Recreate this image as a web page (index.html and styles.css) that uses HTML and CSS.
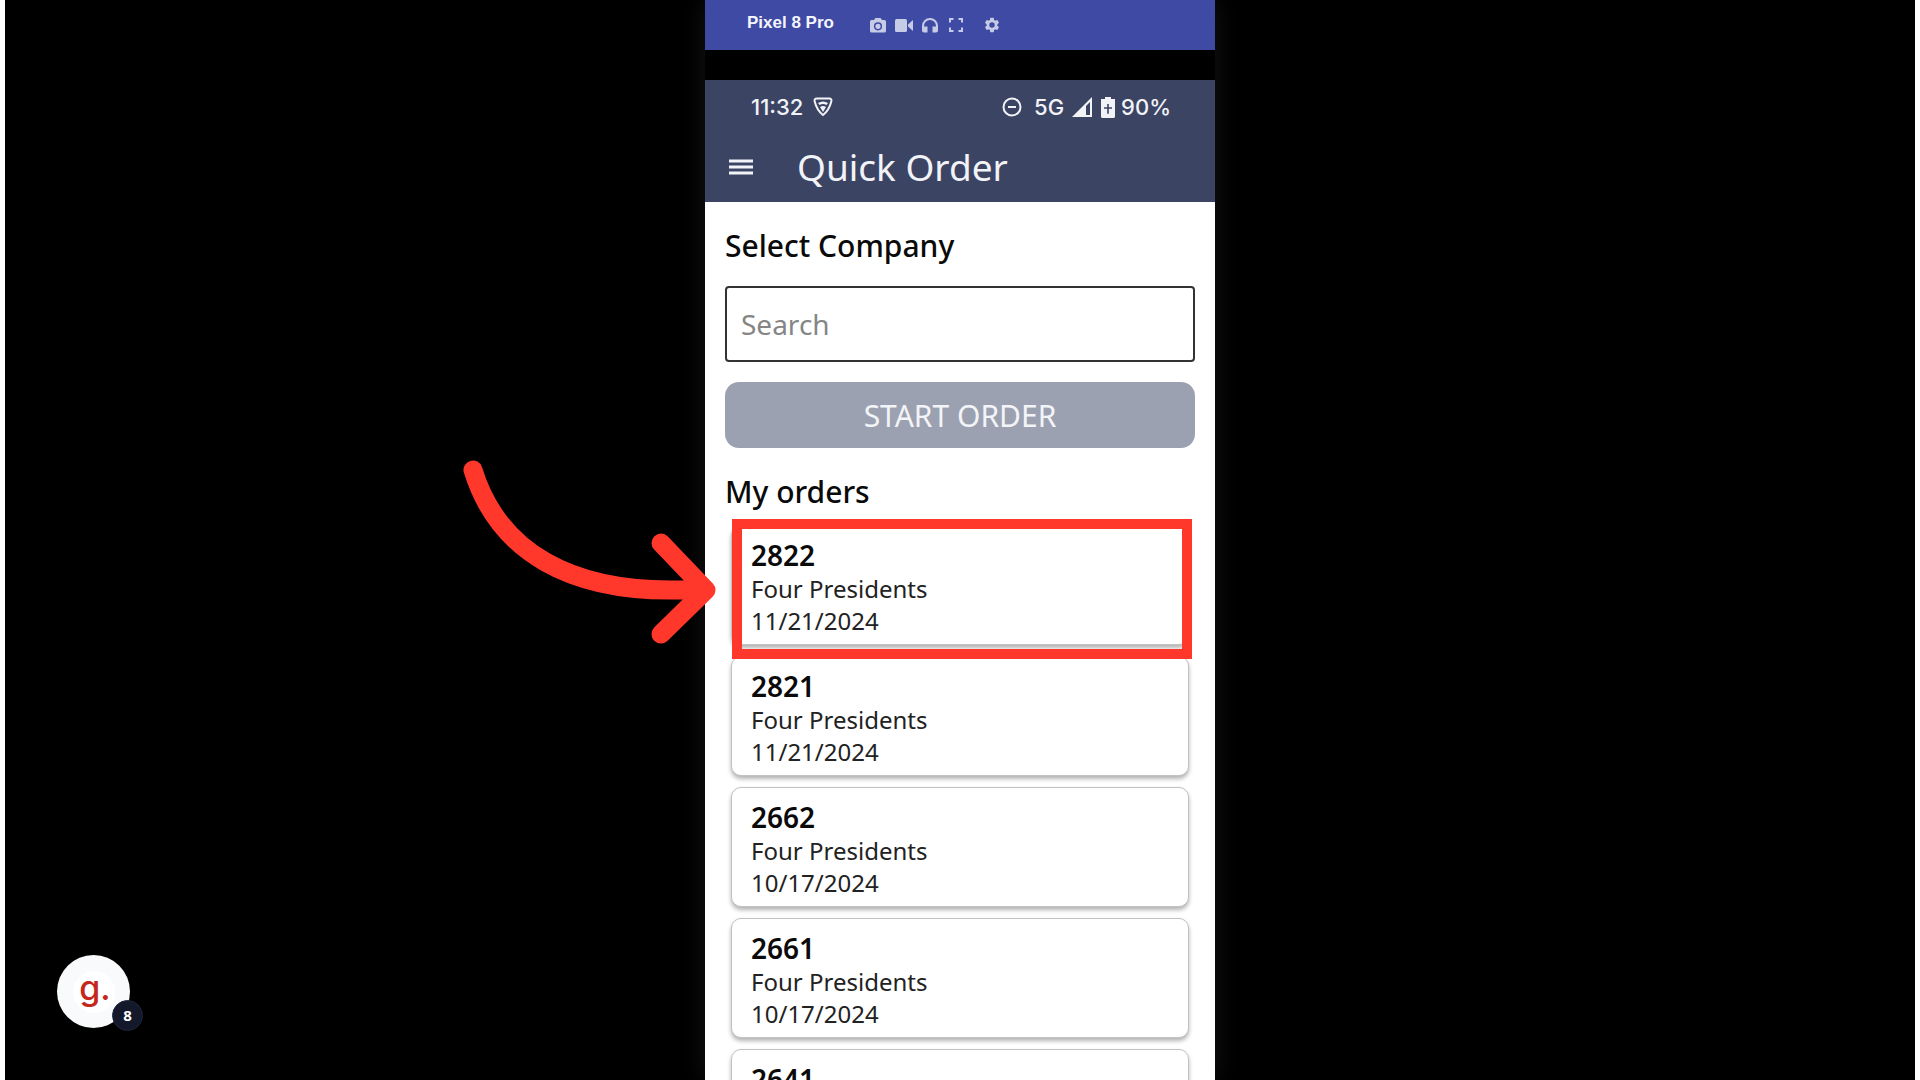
FILE: index.html
```html
<!DOCTYPE html>
<html lang="en">
<head>
<meta charset="utf-8">
<meta name="viewport" content="width=device-width, initial-scale=1">
<title>Quick Order</title>
<link rel="stylesheet" href="styles.css">
</head>
<body>
<main class="stage">
  <div class="phone">
    <div class="toolbar">
      <span class="device">Pixel 8 Pro</span>
      <div class="tools">
        <button class="tool" type="button" aria-label="Screenshot"><svg width="16" height="15" viewBox="0 0 16 15"><path fill-rule="evenodd" d="M5.4 0h5.2L12 2h2.400Q16 2 16 3.600v9.400Q16 14.600 14.400 14.600H1.600Q0 14.600 0 13V3.600Q0 2 1.600 2H4zM8 4.200a4.100 4.100 0 1 0 0 8.200a4.100 4.100 0 1 0 0-8.200zM8 5.700a2.600 2.600 0 1 1 0 5.200a2.600 2.600 0 1 1 0-5.200z"/></svg></button>
        <button class="tool" type="button" aria-label="Record"><svg width="18" height="13" viewBox="0 0 18 13"><rect width="12" height="13" rx="1.500"/><path d="M13 5.500 18 1v11l-5-4.500z"/></svg></button>
        <button class="tool" type="button" aria-label="Audio"><svg width="16" height="15" viewBox="0 0 16 15"><path d="M8 0a8 8 0 0 0-8 8v4.500A2 2 0 0 0 2 14.500h3.500V8.500H2V8a6 6 0 0 1 12 0v.5h-3.500v6H14a2 2 0 0 0 2-2V8a8 8 0 0 0-8-8z"/></svg></button>
        <button class="tool" type="button" aria-label="Full screen"><svg width="14" height="14" viewBox="0 0 14 14"><path d="M0 0h4.500v2H2v2.500H0zM9.500 0H14v4.500h-2V2H9.500zM0 9.500h2V12h2.500v2H0zM12 9.500h2V14H9.500v-2H12z"/></svg></button>
        <button class="tool tool-settings" type="button" aria-label="Settings"><svg width="18" height="18" viewBox="0 0 24 24"><path d="M19.140 12.940c.04-.3.060-.61.060-.94 0-.32-.02-.64-.07-.94l2.030-1.580c.18-.14.23-.41.120-.61l-1.920-3.320c-.12-.22-.37-.29-.59-.22l-2.390.96c-.5-.38-1.030-.7-1.620-.94l-.36-2.540c-.04-.24-.24-.41-.48-.41h-3.840c-.24 0-.43.170-.47.410l-.36 2.540c-.59.240-1.130.570-1.620.940l-2.390-.96c-.22-.08-.47 0-.59.220L2.740 8.870c-.12.210-.08.470.120.610l2.030 1.580c-.05.300-.09.630-.09.940s.02.640.070.940l-2.030 1.580c-.18.140-.23.410-.12.610l1.920 3.320c.120.220.370.290.590.220l2.390-.96c.500.380 1.030.700 1.620.940l.36 2.540c.050.240.240.410.480.410h3.840c.240 0 .440-.17.470-.41l.36-2.540c.590-.24 1.130-.56 1.620-.94l2.390.96c.220.080.470 0 .590-.22l1.920-3.320c.120-.22.070-.47-.12-.61l-2.010-1.580zM12 15.600a3.600 3.600 0 1 1 0-7.200a3.600 3.600 0 0 1 0 7.200z"/></svg></button>
      </div>
    </div>

    <header class="app-header">
      <div class="status">
        <span>11:32</span>
        <svg class="status-shield" width="20" height="20" viewBox="0 0 20 20"><path d="M4 1.500h12q3.200 0 2.300 3Q16 13.500 10 18 4 13.500 1.700 4.500q-.9-3 2.300-3z" fill="none" stroke="currentColor" stroke-width="2"/><path d="M5 6q5-3 10 0l-1.500 2q-3.500-2-7 0zM7 10q3-2 6 0l-3 5z" fill="currentColor"/></svg>
        <span class="status-space"></span>
        <svg class="status-dnd" width="20" height="20" viewBox="0 0 20 20" fill="none" stroke="currentColor" stroke-width="2"><circle cx="10" cy="10" r="8.500"/><path d="M6 10h8"/></svg>
        <span>5G</span>
        <svg class="status-signal" width="20" height="20" viewBox="0 0 20 20"><path fill="currentColor" fill-rule="evenodd" d="M20 0v20H0zM18 5v13h-4V9z"/></svg>
        <svg class="status-battery" width="14" height="21" viewBox="0 0 14 21"><path fill="currentColor" fill-rule="evenodd" d="M4 0h6v2h4v17.500q0 1.500-1.500 1.500h-11Q0 21 0 19.500V2h4zM6.200 7v3.200H3v1.600h3.200v5h1.600v-5H11v-1.600H7.800V7z"/></svg>
        <span>90%</span>
      </div>
      <div class="title-row">
        <button class="menu" type="button" aria-label="Menu"><svg width="24" height="16" viewBox="0 0 24 16"><path d="M0 2h24M0 8h24M0 14h24" stroke="currentColor" stroke-width="3"/></svg></button>
        <h1 class="title">Quick Order</h1>
      </div>
    </header>

    <section class="content">
      <label class="heading" for="company">Select Company</label>
      <input class="search" id="company" type="text" placeholder="Search">
      <button class="start" type="button">START ORDER</button>
      <h2 class="heading">My orders</h2>
      <ul class="orders">
        <li class="order order-marked"><strong class="order-id">2822</strong><span>Four Presidents</span><span>11/21/2024</span></li>
        <li class="order"><strong class="order-id">2821</strong><span>Four Presidents</span><span>11/21/2024</span></li>
        <li class="order"><strong class="order-id">2662</strong><span>Four Presidents</span><span>10/17/2024</span></li>
        <li class="order"><strong class="order-id">2661</strong><span>Four Presidents</span><span>10/17/2024</span></li>
        <li class="order"><strong class="order-id">2641</strong></li>
      </ul>
    </section>

    <svg class="arrow" width="260" height="190" viewBox="460 457 260 190" fill="none" stroke="#ff382b" stroke-width="19" stroke-linecap="round" stroke-linejoin="round"><path d="M473 470C497 548 567 598 700 589M661 543l45 47-45 44"/></svg>
  </div>

  <div class="guide">
    <span class="guide-logo">g.</span>
    <span class="guide-count">8</span>
  </div>
</main>
</body>
</html>
```
FILE: styles.css
```css
* {
  box-sizing: border-box;
}

body {
  margin: 0;
  background: #000;
  font-family: "Noto Sans", "Open Sans", sans-serif;
}

button,
input {
  font: inherit;
}

.stage {
  position: relative;
  display: flex;
  justify-content: center;
  height: 100vh;
  overflow: hidden;
  border: solid #fff;
  border-width: 0 5px;
}

.phone {
  position: relative;
  display: flex;
  flex-direction: column;
  width: 100%;
  max-width: 510px;
  box-shadow: 0 0 24px #161616;
}

.toolbar {
  display: flex;
  flex-shrink: 0;
  align-items: center;
  height: 50px;
  padding: 0 42px;
  background: #3e4aa4;
  color: #f4f5fb;
}

.device {
  width: 118px;
  padding-bottom: 4px;
  font: 700 17px/24px "Liberation Sans", Arial, sans-serif;
}

.tools {
  display: flex;
}

.tool {
  display: flex;
  align-items: center;
  justify-content: center;
  width: 26px;
  height: 26px;
  padding: 0;
  border: 0;
  background: none;
  fill: #c6cbe6;
}

.tool-settings {
  margin-left: 10px;
}

.app-header {
  flex-shrink: 0;
  margin-top: 30px;
  padding: 11px 44px 5px 24px;
  background: #3c4464;
  color: #f2f3f7;
}

.status {
  display: flex;
  align-items: center;
  height: 32px;
  padding-left: 22px;
  font: 500 22px/32px Inter, sans-serif;
}

.status-shield {
  margin-left: 10px;
}

.status-space {
  flex: 1;
}

.status-dnd {
  margin-right: 12px;
}

.status-signal {
  margin: 0 9px 0 8px;
}

.status-battery {
  margin-right: 6px;
}

.title-row {
  display: flex;
  align-items: center;
  gap: 44px;
  height: 60px;
  margin-top: 14px;
}

.menu {
  display: flex;
  padding: 0;
  border: 0;
  background: none;
  color: inherit;
}

.title {
  margin: 0;
  font-size: 37px;
  font-weight: 400;
  line-height: 48px;
}

.content {
  display: flex;
  flex-direction: column;
  flex: 1 0 auto;
  padding: 24px 20px 0;
  background: #fff;
}

.heading {
  margin: 0;
  font-size: 30px;
  font-weight: 500;
  line-height: 40px;
  color: #0a0a0a;
}

.search {
  height: 76px;
  margin: 20px 0;
  padding: 0 14px;
  border: 2px solid #333;
  border-radius: 4px;
  background: #fff;
  font-size: 28px;
  color: #222;
}

.search::placeholder {
  color: #858585;
  opacity: 1;
}

.start {
  height: 66px;
  margin-bottom: 24px;
  border: 0;
  border-radius: 14px;
  background: #9ba1b0;
  color: #f3f4f7;
  font-size: 30px;
}

.orders {
  display: flex;
  flex-direction: column;
  gap: 11px;
  margin: 13px 0 0;
  padding: 0 6px;
  list-style: none;
}

.order {
  position: relative;
  display: flex;
  flex-direction: column;
  height: 120px;
  padding: 11px 19px;
  border: 1px solid #c2c2c2;
  border-radius: 10px;
  background: #fff;
  box-shadow: 0 3px 4px rgba(0, 0, 0, 0.3);
  font-size: 24px;
  line-height: 32px;
  color: #222;
}

.order-id {
  font-size: 28px;
  font-weight: 600;
  line-height: 36px;
  color: #0a0a0a;
}

/* Red frame over the order to pick */
.order-marked {
  z-index: 1;
}

.order-marked::after {
  content: "";
  position: absolute;
  inset: -7px -4px -15px 0;
  border: 10px solid #ff382b;
}

.arrow {
  position: absolute;
  top: 457px;
  left: -245px;
}

.guide {
  position: absolute;
  bottom: 52px;
  left: 52px;
  display: flex;
  align-items: center;
  justify-content: center;
  width: 73px;
  height: 73px;
  border-radius: 50%;
  background: #f8fafc;
}

.guide-logo {
  width: 42px;
  height: 42px;
  padding-left: 3px;
  border-radius: 50%;
  background: #fff;
  font: 500 34px/34px Inter, sans-serif;
  text-align: center;
  color: #c4281c;
}

.guide-count {
  position: absolute;
  right: -13px;
  bottom: -3px;
  width: 31px;
  height: 31px;
  border: 1px solid #1f2638;
  border-radius: 50%;
  background: #13182b;
  font: 700 15px/29px "Open Sans", sans-serif;
  text-align: center;
  color: #fff;
}
```
